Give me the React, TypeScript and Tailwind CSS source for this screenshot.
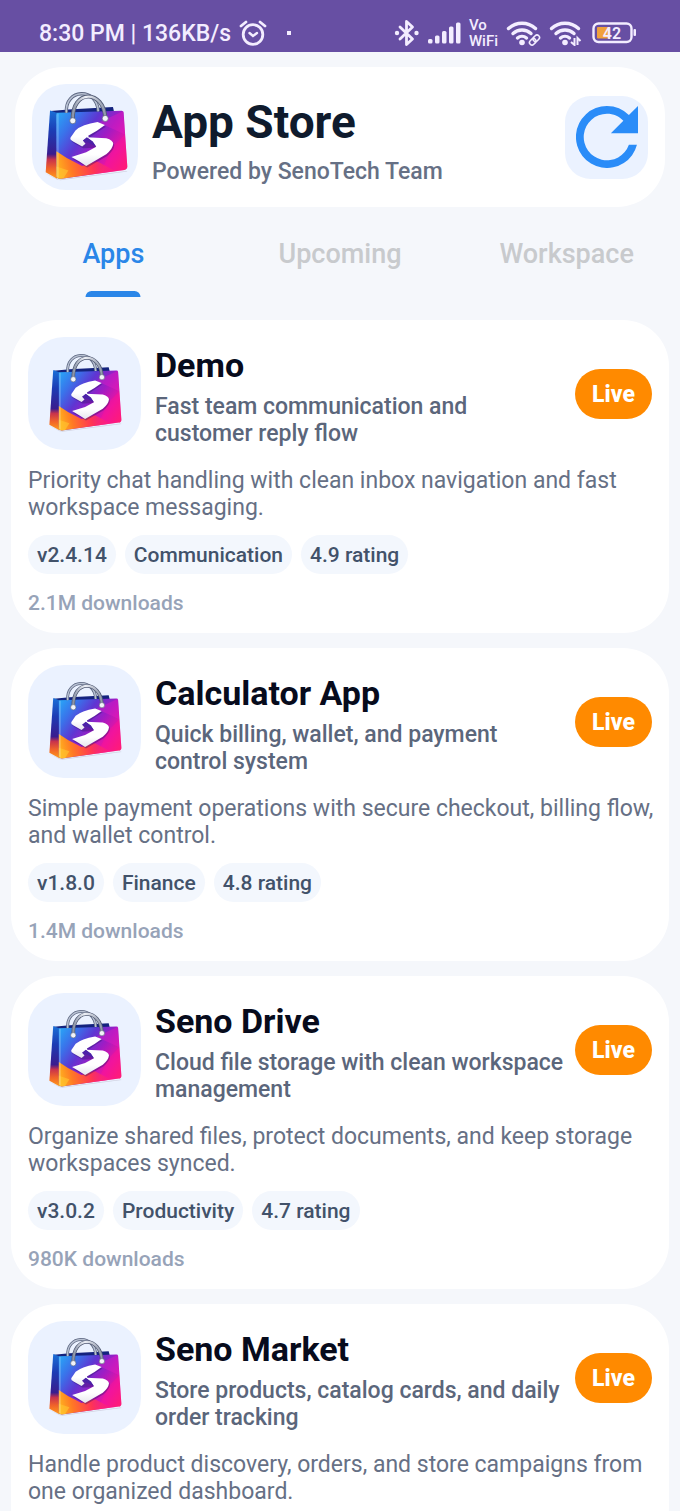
const apps = [
  {
    name: "Demo",
    tagline: "Fast team communication and customer reply flow",
    description:
      "Priority chat handling with clean inbox navigation and fast workspace messaging.",
    tags: ["v2.4.14", "Communication", "4.9 rating"],
    downloads: "2.1M downloads",
  },
  {
    name: "Calculator App",
    tagline: "Quick billing, wallet, and payment control system",
    description:
      "Simple payment operations with secure checkout, billing flow, and wallet control.",
    tags: ["v1.8.0", "Finance", "4.8 rating"],
    downloads: "1.4M downloads",
  },
  {
    name: "Seno Drive",
    tagline: "Cloud file storage with clean workspace management",
    description:
      "Organize shared files, protect documents, and keep storage workspaces synced.",
    tags: ["v3.0.2", "Productivity", "4.7 rating"],
    downloads: "980K downloads",
  },
  {
    name: "Seno Market",
    tagline: "Store products, catalog cards, and daily order tracking",
    description:
      "Handle product discovery, orders, and store campaigns from one organized dashboard.",
    tags: [],
    downloads: "",
  },
];

const tabs = ["Apps", "Upcoming", "Workspace"];

function BagLogo({ className }: { className: string }) {
  return (
    <svg viewBox="126 92 260 278" className={className} aria-hidden="true">
      <defs>
        <linearGradient id="bag-front" x1="0" y1="0.1" x2="1" y2="0.8">
          <stop offset="0" stopColor="#2aa0f6" />
          <stop offset="0.18" stopColor="#3a72ea" />
          <stop offset="0.38" stopColor="#5e36d2" />
          <stop offset="0.58" stopColor="#a01cc4" />
          <stop offset="0.8" stopColor="#e814a4" />
          <stop offset="1" stopColor="#ff2068" />
        </linearGradient>
        <linearGradient id="bag-side" x1="0" y1="0" x2="0" y2="1">
          <stop offset="0" stopColor="#1a6fd6" />
          <stop offset="0.3" stopColor="#1c3cb4" />
          <stop offset="0.64" stopColor="#3a1c8e" />
          <stop offset="0.72" stopColor="#c8324c" />
          <stop offset="0.85" stopColor="#f0622a" />
          <stop offset="1" stopColor="#ff9a1a" />
        </linearGradient>
        <linearGradient id="bag-flame" gradientUnits="userSpaceOnUse" x1="170" y1="340" x2="350" y2="300">
          <stop offset="0" stopColor="#ffb81e" />
          <stop offset="0.25" stopColor="#ff7a24" />
          <stop offset="0.6" stopColor="#ff3455" />
          <stop offset="1" stopColor="#ff2080" stopOpacity="0.2" />
        </linearGradient>
        <linearGradient id="bag-letter" x1="0" y1="0" x2="0" y2="1">
          <stop offset="0.6" stopColor="#ffffff" />
          <stop offset="1" stopColor="#e6e6ee" />
        </linearGradient>
        <linearGradient id="bag-handle" x1="0" y1="0" x2="1" y2="0">
          <stop offset="0" stopColor="#8a93a6" />
          <stop offset="0.4" stopColor="#eef1f7" />
          <stop offset="1" stopColor="#8f97aa" />
        </linearGradient>
      </defs>
      <path d="M132 336 L172 357 L378 331 L382 333 L180 359 Z" fill="#a8a0b4" opacity="0.4" />
      <path d="M152 152 L205 147 L338 140 L342 156 L172 164 Z" fill="#14237e" />
      <path d="M150 150 L170 157 L171 354 L137 335 Z" fill="url(#bag-side)" />
      <path
        d="M169 157 L364 151 Q369 151 370 156 L381 318 Q381 327 372 328 L184 354 Q169 356 169 346 Z"
        fill="url(#bag-front)"
      />
      <path d="M369 152 L374 222 L296 186 Z" fill="#e51cc4" opacity="0.4" />
      <path d="M374 222 L381 318 Q381 327 372 328 L300 338 L335 262 Z" fill="#ff1493" opacity="0.4" />
      <path
        d="M169 272 L200 292 L246 316 L290 302 L345 331 L184 354 Q169 356 169 346 Z"
        fill="url(#bag-flame)"
      />
      <path d="M169 318 L205 330 L190 353 Q169 356 169 346 Z" fill="#ffc830" opacity="0.6" />
      <path d="M170 159 L176 159 L176 352 L169 348 Z" fill="#ffffff" opacity="0.2" />
      <path d="M199 157 C193 84 291 80 294 153" fill="none" stroke="#5c6680" strokeWidth="10" />
      <path d="M199 157 C193 84 291 80 294 153" fill="none" stroke="#b8c1d2" strokeWidth="5" />
      <path
        d="M218 180 C214 84 312 88 315 173"
        fill="none"
        stroke="#525b74"
        strokeWidth="12"
        strokeLinecap="round"
      />
      <path
        d="M218 180 C214 84 312 88 315 173"
        fill="none"
        stroke="url(#bag-handle)"
        strokeWidth="7"
        strokeLinecap="round"
      />
      <circle cx="218" cy="181" r="9" fill="#f2f4f9" stroke="#59627a" strokeWidth="2" />
      <circle cx="315" cy="174" r="9" fill="#f2f4f9" stroke="#59627a" strokeWidth="2" />
      <path
        d="M314 194 L292 185 Q246 192 226 210 L211 232 Q209 238 219 243 L246 258 L285 257 L215 290 L258 316 L318 281 Q338 264 339 250 Q338 238 328 236 L266 226 L288 210 Z"
        transform="translate(3 5)"
        fill="#32106e"
        opacity="0.4"
      />
      <path
        d="M314 194 L292 185 Q246 192 226 210 L211 232 Q209 238 219 243 L246 258 L256 250 L248 240 L266 230 L264 226 L290 211 Z"
        fill="url(#bag-letter)"
      />
      <path
        d="M260 230 L318 233 Q339 239 339 250 Q337 266 318 281 L258 316 L238 303 L214 289 L258 275 L288 259 L276 244 Z"
        fill="url(#bag-letter)"
      />
      <path d="M260 230 L278 243 L288 259 L266 247 L248 240 Z" fill="#4b22a8" />
    </svg>
  );
}

function RefreshIcon() {
  return (
    <svg viewBox="4 4 16 16" className="size-[62px]" fill="#2a8cf8" aria-hidden="true">
      <path d="M17.65 6.35A7.96 7.96 0 0 0 12 4a8 8 0 1 0 7.73 10h-2.08A6 6 0 1 1 12 6c1.66 0 3.14.69 4.22 1.78L13 11h7V4l-2.35 2.35z" />
    </svg>
  );
}

function AlarmIcon() {
  return (
    <svg viewBox="0 0 28 26" className="h-[26px] w-7" fill="none" stroke="currentColor" aria-hidden="true">
      <circle cx="14" cy="14.5" r="9.8" strokeWidth="2.8" />
      <path d="M10.5 13 L14 16 L18 13" strokeWidth="2.4" strokeLinecap="round" />
      <path d="M2 6 L7 2 M26 6 L21 2" strokeWidth="2.8" strokeLinecap="round" />
    </svg>
  );
}

function BluetoothIcon() {
  return (
    <svg viewBox="0 0 26 28" className="h-7 w-[26px]" fill="none" stroke="currentColor" aria-hidden="true">
      <path
        d="M6 8 L18.5 20 L12.5 25.5 V2.5 L18.5 8 L6 20"
        strokeWidth="2.8"
        strokeLinejoin="round"
        strokeLinecap="round"
      />
      <circle cx="3" cy="14" r="2.2" fill="currentColor" stroke="none" />
      <circle cx="22.5" cy="14" r="2.2" fill="currentColor" stroke="none" />
    </svg>
  );
}

function SignalIcon() {
  return (
    <svg viewBox="0 0 33 22" className="h-[22px] w-[33px]" fill="currentColor" aria-hidden="true">
      <rect x="0" y="17" width="4.5" height="4.5" rx="1.5" />
      <rect x="7" y="13.5" width="4.5" height="8" rx="1.5" />
      <rect x="14" y="9" width="4.5" height="12.5" rx="1.5" />
      <rect x="21" y="4.5" width="4.5" height="17" rx="1.5" />
      <rect x="28" y="0.5" width="4.5" height="21" rx="1.5" />
    </svg>
  );
}

function WifiIcon({ badge }: { badge: "link" | "traffic" }) {
  return (
    <svg viewBox="0 0 35 26" className="h-[26px] w-[35px]" fill="none" stroke="currentColor" aria-hidden="true">
      <g strokeWidth="3.4" strokeLinecap="round">
        <path d="M2.5 8.5 A20 20 0 0 1 29.5 8.5" />
        <path d="M7 13.5 A13.5 13.5 0 0 1 25 13.5" />
        <path d="M11.5 18 A7 7 0 0 1 20.5 18" />
      </g>
      <circle cx="16" cy="22.5" r="2.8" fill="currentColor" stroke="none" />
      {badge === "link" ? (
        <g transform="rotate(-45 28.5 20)" strokeWidth="1.6">
          <rect x="22.5" y="17.5" width="7" height="5" rx="2.5" />
          <rect x="27.5" y="17.5" width="7" height="5" rx="2.5" />
        </g>
      ) : (
        <path d="M22 22 L25.5 25 V18 M28.5 25 V18 L31.5 21" strokeWidth="2" />
      )}
    </svg>
  );
}

function BatteryIcon() {
  return (
    <svg viewBox="0 0 45 22" className="h-[22px] w-[45px]" role="img" aria-label="Battery 42%">
      <rect x="1.5" y="1.5" width="38" height="18.5" rx="5" fill="none" stroke="#f3edff" strokeWidth="2.4" />
      <rect x="5" y="5" width="13" height="11.5" rx="1" fill="#f0a03c" />
      <rect x="41.5" y="7" width="2.5" height="7" rx="1" fill="#f3edff" />
      <text
        x="20"
        y="16.5"
        textAnchor="middle"
        fontSize="16"
        fontWeight="600"
        fill="#f3edff"
        fontFamily="Roboto, sans-serif"
      >
        42
      </text>
    </svg>
  );
}

function StatusBar() {
  return (
    <div className="flex h-[52px] items-center justify-between bg-[#674fa3] pt-[14px] pr-[43px] pl-[39px] text-[#f3edff]">
      <div className="flex items-center gap-2">
        <span className="pt-[2px] text-[23px] leading-7 font-medium whitespace-nowrap">
          8:30 PM | 136KB/s
        </span>
        <AlarmIcon />
        <span className="ml-3 size-1 bg-current" />
      </div>
      <div className="flex items-center gap-2">
        <BluetoothIcon />
        <SignalIcon />
        <div className="text-[15px] leading-4 font-medium">
          <div>Vo</div>
          <div>WiFi</div>
        </div>
        <WifiIcon badge="link" />
        <WifiIcon badge="traffic" />
        <BatteryIcon />
      </div>
    </div>
  );
}

function Header() {
  return (
    <header className="mx-[15px] mt-[15px] flex items-center rounded-[48px] bg-white p-[17px]">
      <div className="grid size-[106px] shrink-0 place-items-center rounded-[34px] bg-[#ebf2ff]">
        <BagLogo className="h-[93px] w-[87px]" />
      </div>
      <div className="ml-[14px] min-w-0 flex-1 pt-[9px]">
        <h1 className="text-[46px] leading-[52px] font-bold text-[#0f1b2d]">App Store</h1>
        <p className="mt-2 text-[23px] leading-8 font-medium text-[#667085]">
          Powered by SenoTech Team
        </p>
      </div>
      <button
        type="button"
        aria-label="Refresh"
        className="grid size-[83px] shrink-0 place-items-center rounded-[26px] bg-[#ebf2ff]"
      >
        <RefreshIcon />
      </button>
    </header>
  );
}

function Tabs() {
  return (
    <nav className="flex h-[113px] pb-[23px]" role="tablist">
      {tabs.map((tab, i) => (
        <button
          key={tab}
          type="button"
          role="tab"
          aria-selected={i === 0}
          className={`relative flex-1 pt-[3px] text-[27px] leading-8 font-medium ${
            i === 0 ? "text-[#2a86e8]" : "text-[#c8cacd]"
          }`}
        >
          {tab}
          {i === 0 && (
            <span className="absolute bottom-0 left-1/2 h-[6px] w-[55px] -translate-x-1/2 rounded-t-md bg-[#2a86e8]" />
          )}
        </button>
      ))}
    </nav>
  );
}

function AppCard({ app }: { app: (typeof apps)[number] }) {
  return (
    <article className="rounded-[46px] bg-white p-[17px]">
      <div className="flex items-center">
        <div className="grid size-[113px] shrink-0 place-items-center rounded-[36px] bg-[#ebf2ff]">
          <BagLogo className="h-[82px] w-[77px]" />
        </div>
        <div className="mr-[6px] ml-[14px] min-w-0 flex-1 pt-[5px]">
          <h2 className="text-[34px] leading-10 font-bold text-[#070b1c]">{app.name}</h2>
          <p className="mt-2 text-[23px] leading-[27px] font-medium text-[#5b667b]">{app.tagline}</p>
        </div>
        <button
          type="button"
          className="h-[50px] w-[77px] shrink-0 rounded-full bg-[#ff8a00] pt-1 text-[23px] font-extrabold text-white"
        >
          Live
        </button>
      </div>
      <p className="-mr-2 mt-[17px] text-[23px] leading-[27px] text-[#667085]">{app.description}</p>
      <ul className="mt-[14px] flex gap-[9px]">
        {app.tags.map((tag) => (
          <li
            key={tag}
            className="rounded-full bg-[#f3f7fd] px-[9px] pt-2 pb-[6px] text-[21px] leading-[25px] font-medium text-[#42526a]"
          >
            {tag}
          </li>
        ))}
      </ul>
      <p className="mt-[17px] text-[21px] leading-[25px] font-medium text-[#97a3b8]">{app.downloads}</p>
    </article>
  );
}

export default function App() {
  return (
    <div className="h-screen overflow-hidden bg-[#f5f7fb] font-[Roboto,sans-serif]">
      <StatusBar />
      <Header />
      <Tabs />
      <main className="flex flex-col gap-[15px] px-[11px]">
        {apps.map((app) => (
          <AppCard key={app.name} app={app} />
        ))}
      </main>
    </div>
  );
}
